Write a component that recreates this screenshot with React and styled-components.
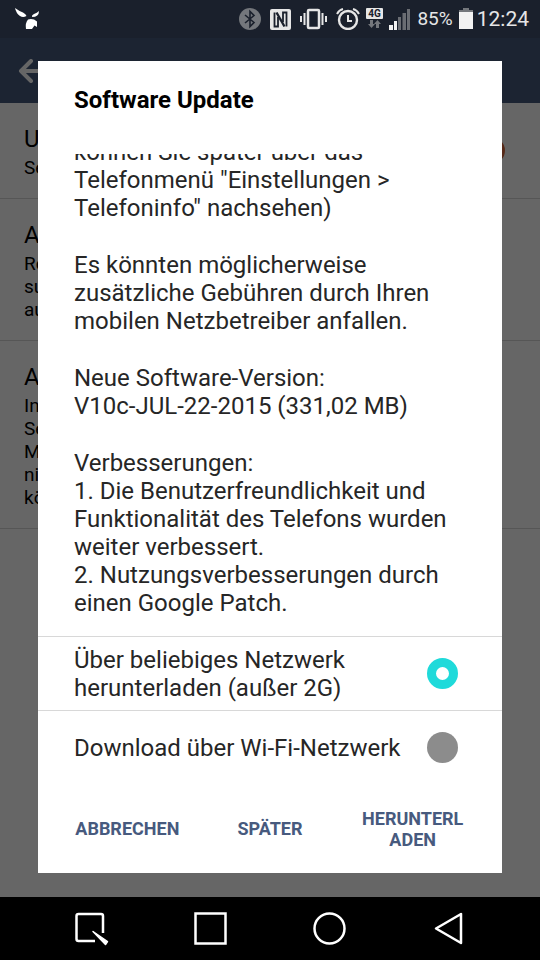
import styled, { createGlobalStyle } from "styled-components";

const colors = {
  primary: "#475a7e",
  status: "#1a202c",
  accent: "#1fdada",
  grey: "#8c8c8c",
  line: "#d8d8d8",
  text: "#262626",
};

const GlobalStyle = createGlobalStyle`
  * {
    box-sizing: border-box;
  }
  body {
    margin: 0;
    font-family: Roboto, sans-serif;
    background: #000000;
  }
`;

const Phone = styled.div`
  min-height: 100vh;
  display: flex;
  flex-direction: column;
`;

const StatusBar = styled.header`
  height: 38px;
  padding: 0 11px 0 14px;
  display: flex;
  align-items: center;
  justify-content: space-between;
  background: ${colors.status};
  color: #e6e6e6;
`;

const StatusIcons = styled.div`
  display: flex;
  align-items: center;
  gap: ${(props) => props.$gap}px;
`;

const StatusText = styled.span`
  font-size: ${(props) => props.$size}px;
  line-height: 24px;
`;

const Screen = styled.div`
  position: relative;
  flex: 1;
  display: flex;
  flex-direction: column;
  background: #ffffff;
`;

const AppBar = styled.div`
  height: 65px;
  padding: 0 18px;
  display: flex;
  align-items: center;
  background: ${colors.primary};
`;

const BackButton = styled.button`
  display: flex;
  padding: 0;
  border: none;
  background: none;
  cursor: pointer;
`;

const SettingList = styled.ul`
  list-style: none;
  margin: 0;
  padding: 0;
`;

const SettingRow = styled.li`
  display: flex;
  align-items: center;
  justify-content: space-between;
  padding: 19px 35px 19px 24px;
  border-bottom: 1px solid ${colors.line};
`;

const SettingTitle = styled.div`
  font-size: 24px;
  line-height: 34px;
`;

const SettingText = styled.div`
  font-size: 19px;
  line-height: 23px;
`;

const Switch = styled.input`
  appearance: none;
  width: 27px;
  height: 27px;
  margin: 0;
  border-radius: 50%;
  background: #d8683c;
`;

const Backdrop = styled.div`
  position: absolute;
  inset: 0;
  display: flex;
  padding: 23px 38px 24px;
  background: rgba(0, 0, 0, 0.6);
`;

const Dialog = styled.section`
  flex: 1;
  display: flex;
  flex-direction: column;
  background: #ffffff;
`;

const DialogTitle = styled.h1`
  margin: 0;
  padding: 23px 36px 38px;
  font-size: 24px;
  font-weight: 700;
  line-height: 32px;
  color: #000000;
`;

const DialogBody = styled.div`
  flex: 1 1 0;
  min-height: 0;
  overflow: hidden;
  display: flex;
  flex-direction: column;
  justify-content: flex-end;
  gap: 29px;
  padding: 0 36px 19px;
`;

const Paragraph = styled.p`
  margin: 0;
  flex-shrink: 0;
  font-size: 24px;
  line-height: 28px;
  color: ${colors.text};
  white-space: pre-line;
`;

const Option = styled.label`
  display: flex;
  align-items: center;
  justify-content: space-between;
  gap: 24px;
  min-height: 74px;
  padding: 0 44px 0 36px;
  border-top: 1px solid ${colors.line};
  font-size: 24px;
  line-height: 28px;
  color: ${colors.text};
  white-space: pre-line;
  cursor: pointer;
`;

const Radio = styled.input`
  appearance: none;
  flex-shrink: 0;
  width: 31px;
  height: 31px;
  margin: 0;
  border-radius: 50%;
  background: ${colors.grey};
  &:checked {
    border: 9px solid ${colors.accent};
    background: #ffffff;
  }
`;

const Actions = styled.div`
  display: grid;
  grid-template-columns: repeat(3, 1fr);
  height: 89px;
  padding: 0 18px;
`;

const ActionButton = styled.button`
  padding: 0 19px;
  border: none;
  background: none;
  font-family: inherit;
  font-size: 18px;
  font-weight: 700;
  line-height: 21px;
  word-break: break-all;
  color: ${colors.primary};
  cursor: pointer;
  &:hover {
    background: #f2f2f2;
  }
`;

const NavBar = styled.nav`
  height: 63px;
  display: grid;
  grid-template-columns: repeat(4, 119px);
  justify-content: center;
  background: #000000;
`;

const NavButton = styled.button`
  display: flex;
  align-items: center;
  justify-content: center;
  padding: 0;
  border: none;
  background: none;
  cursor: pointer;
`;

const settings = [
  { title: "U", lines: ["Se"], toggle: true },
  { title: "A", lines: ["Re", "su", "au"] },
  { title: "A", lines: ["In", "Se", "M", "ni", "kö"] },
];

const paragraphs = [
  'können Sie später über das\nTelefonmenü "Einstellungen >\nTelefoninfo" nachsehen)',
  "Es könnten möglicherweise\nzusätzliche Gebühren durch Ihren\nmobilen Netzbetreiber anfallen.",
  "Neue Software-Version:\nV10c-JUL-22-2015 (331,02 MB)",
  "Verbesserungen:\n1. Die Benutzerfreundlichkeit und\nFunktionalität des Telefons wurden\nweiter verbessert.\n2. Nutzungsverbesserungen durch\neinen Google Patch.",
];

function NotificationIcon() {
  return (
    <svg width="26" height="24" viewBox="0 0 26 24" fill="#ffffff">
      <path d="M1 1 Q5 4 9 5.500 Q12 7 12.500 9 Q9 11 6 9 Q2 6 1 1Z" />
      <path d="M25 4 Q25 10 18 10 Q17.500 8 20 7 Q23 6 25 4Z" />
      <path d="M14 12.500 Q19 11 23 14.500 L23 20 L20.500 18.500 L18 22 L12 22 Q11 16 14 12.500Z" />
    </svg>
  );
}

function BluetoothIcon() {
  return (
    <svg width="22" height="22" viewBox="0 0 22 22" fill="none">
      <circle cx="11" cy="11" r="11" fill="#74777c" />
      <path d="M6 7 L15 14.500 L11 18.500 V3.500 L15 7.500 L6 15" stroke={colors.status} strokeWidth="1.6" />
    </svg>
  );
}

function NfcIcon() {
  return (
    <svg width="21" height="21" viewBox="0 0 21 21" fill="none">
      <rect width="21" height="21" rx="2" fill="#e6e6e6" />
      <g stroke={colors.status} strokeWidth="1.8">
        <path d="M4.500 3.500 V17.500 H8 V8" />
        <path d="M6.500 3.500 L14.500 17.500" strokeWidth="2.4" />
        <path d="M13 13 V3.500 H16.500 V17.500" />
      </g>
    </svg>
  );
}

function VibrateIcon() {
  return (
    <svg width="27" height="22" viewBox="0 0 27 22" fill="none" stroke="#e6e6e6" strokeWidth="2">
      <rect x="8" y="2" width="11" height="18" rx="1" strokeWidth="2.5" />
      <path d="M4.500 5 V17 M22.500 5 V17" />
      <path d="M1 8 V14 M26 8 V14" />
    </svg>
  );
}

function AlarmIcon() {
  return (
    <svg width="24" height="22" viewBox="0 0 24 22" fill="none" stroke="#e6e6e6" strokeWidth="2">
      <circle cx="12" cy="12" r="9" strokeWidth="2.4" />
      <path d="M12 7 V13 H16" />
      <path d="M1 6 Q3 2 7 1 M23 6 Q21 2 17 1" />
    </svg>
  );
}

function NetworkIcon() {
  return (
    <svg width="17" height="22" viewBox="0 0 17 22">
      <rect width="17" height="11" rx="1" fill="#e6e6e6" />
      <text x="8.500" y="9" textAnchor="middle" fontSize="10" fontWeight="700" fill={colors.status}>
        4G
      </text>
      <path d="M4 12 H7 V16 H9 L5.500 20 L2 16 H4Z" fill="#74777c" />
      <path d="M10 20 H13 V16 H15 L11.500 12 L8 16 H10Z" fill="#74777c" />
    </svg>
  );
}

function SignalIcon() {
  return (
    <svg width="22" height="22" viewBox="0 0 22 22">
      <path d="M0 17 H4 V22 H0Z M5 13 H8 V22 H5Z" fill="#f2f2f2" />
      <path d="M9 9 H12 V22 H9Z M13.500 5 H17 V22 H13.500Z M18 1 H21 V22 H18Z" fill="#6a6d73" />
    </svg>
  );
}

function BatteryIcon() {
  return (
    <svg width="14" height="22" viewBox="0 0 14 22">
      <path d="M4 0 H10 V2 H14 V5 H0 V2 H4Z" fill="#74777c" />
      <path d="M0 4 H14 V21 H0Z" fill="#f2f2f2" />
    </svg>
  );
}

function App() {
  return (
    <Phone>
      <GlobalStyle />
      <StatusBar>
        <NotificationIcon />
        <StatusIcons $gap={6}>
          <StatusIcons $gap={9}>
            <BluetoothIcon />
            <NfcIcon />
            <VibrateIcon />
            <AlarmIcon />
          </StatusIcons>
          <NetworkIcon />
          <SignalIcon />
          <StatusText $size={19}>85%</StatusText>
          <StatusIcons $gap={4}>
            <BatteryIcon />
            <StatusText $size={21}>12:24</StatusText>
          </StatusIcons>
        </StatusIcons>
      </StatusBar>
      <Screen>
        <AppBar>
          <BackButton aria-label="Zurück">
            <svg width="28" height="24" viewBox="0 0 28 24" fill="none" stroke="#ffffff" strokeWidth="4">
              <path d="M13 2 L3 12 L13 22 M3 12 H28" strokeLinecap="round" strokeLinejoin="round" />
            </svg>
          </BackButton>
        </AppBar>
        <SettingList>
          {settings.map((item, index) => (
            <SettingRow key={index}>
              <div>
                <SettingTitle>{item.title}</SettingTitle>
                {item.lines.map((line) => (
                  <SettingText key={line}>{line}</SettingText>
                ))}
              </div>
              {item.toggle && <Switch type="checkbox" role="switch" aria-label={item.title} defaultChecked />}
            </SettingRow>
          ))}
        </SettingList>
        <Backdrop>
          <Dialog role="dialog" aria-labelledby="dialog-title">
            <DialogTitle id="dialog-title">Software Update</DialogTitle>
            <DialogBody>
              {paragraphs.map((text) => (
                <Paragraph key={text}>{text}</Paragraph>
              ))}
            </DialogBody>
            <Option>
              {"Über beliebiges Netzwerk\nherunterladen (außer 2G)"}
              <Radio type="radio" name="network" defaultChecked />
            </Option>
            <Option>
              Download über Wi-Fi-Netzwerk
              <Radio type="radio" name="network" />
            </Option>
            <Actions>
              <ActionButton>ABBRECHEN</ActionButton>
              <ActionButton>SPÄTER</ActionButton>
              <ActionButton>HERUNTERLADEN</ActionButton>
            </Actions>
          </Dialog>
        </Backdrop>
      </Screen>
      <NavBar>
        <NavButton aria-label="QSlide">
          <svg width="34" height="34" viewBox="0 0 34 34" fill="none" stroke="#ffffff" strokeWidth="2.5">
            <path d="M20 29 H3.500 Q1.500 29 1.500 27 V4 Q1.500 2 3.500 2 H26 Q28 2 28 4 V21" />
            <path d="M18 19.500 L32.500 29.500 L30.500 32.500Z" fill="#ffffff" strokeWidth="1.5" strokeLinejoin="round" />
          </svg>
        </NavButton>
        <NavButton aria-label="Übersicht">
          <svg width="33" height="33" viewBox="0 0 33 33" fill="none" stroke="#ffffff" strokeWidth="2.5">
            <rect x="1.500" y="1.500" width="30" height="30" />
          </svg>
        </NavButton>
        <NavButton aria-label="Startseite">
          <svg width="33" height="33" viewBox="0 0 33 33" fill="none" stroke="#ffffff" strokeWidth="2.5">
            <circle cx="16.500" cy="16.500" r="15" />
          </svg>
        </NavButton>
        <NavButton aria-label="Zurück">
          <svg width="29" height="33" viewBox="0 0 29 33" fill="none" stroke="#ffffff" strokeWidth="2.5">
            <path d="M27 2 V31 L2 16.500Z" strokeLinejoin="round" />
          </svg>
        </NavButton>
      </NavBar>
    </Phone>
  );
}

export default App;
